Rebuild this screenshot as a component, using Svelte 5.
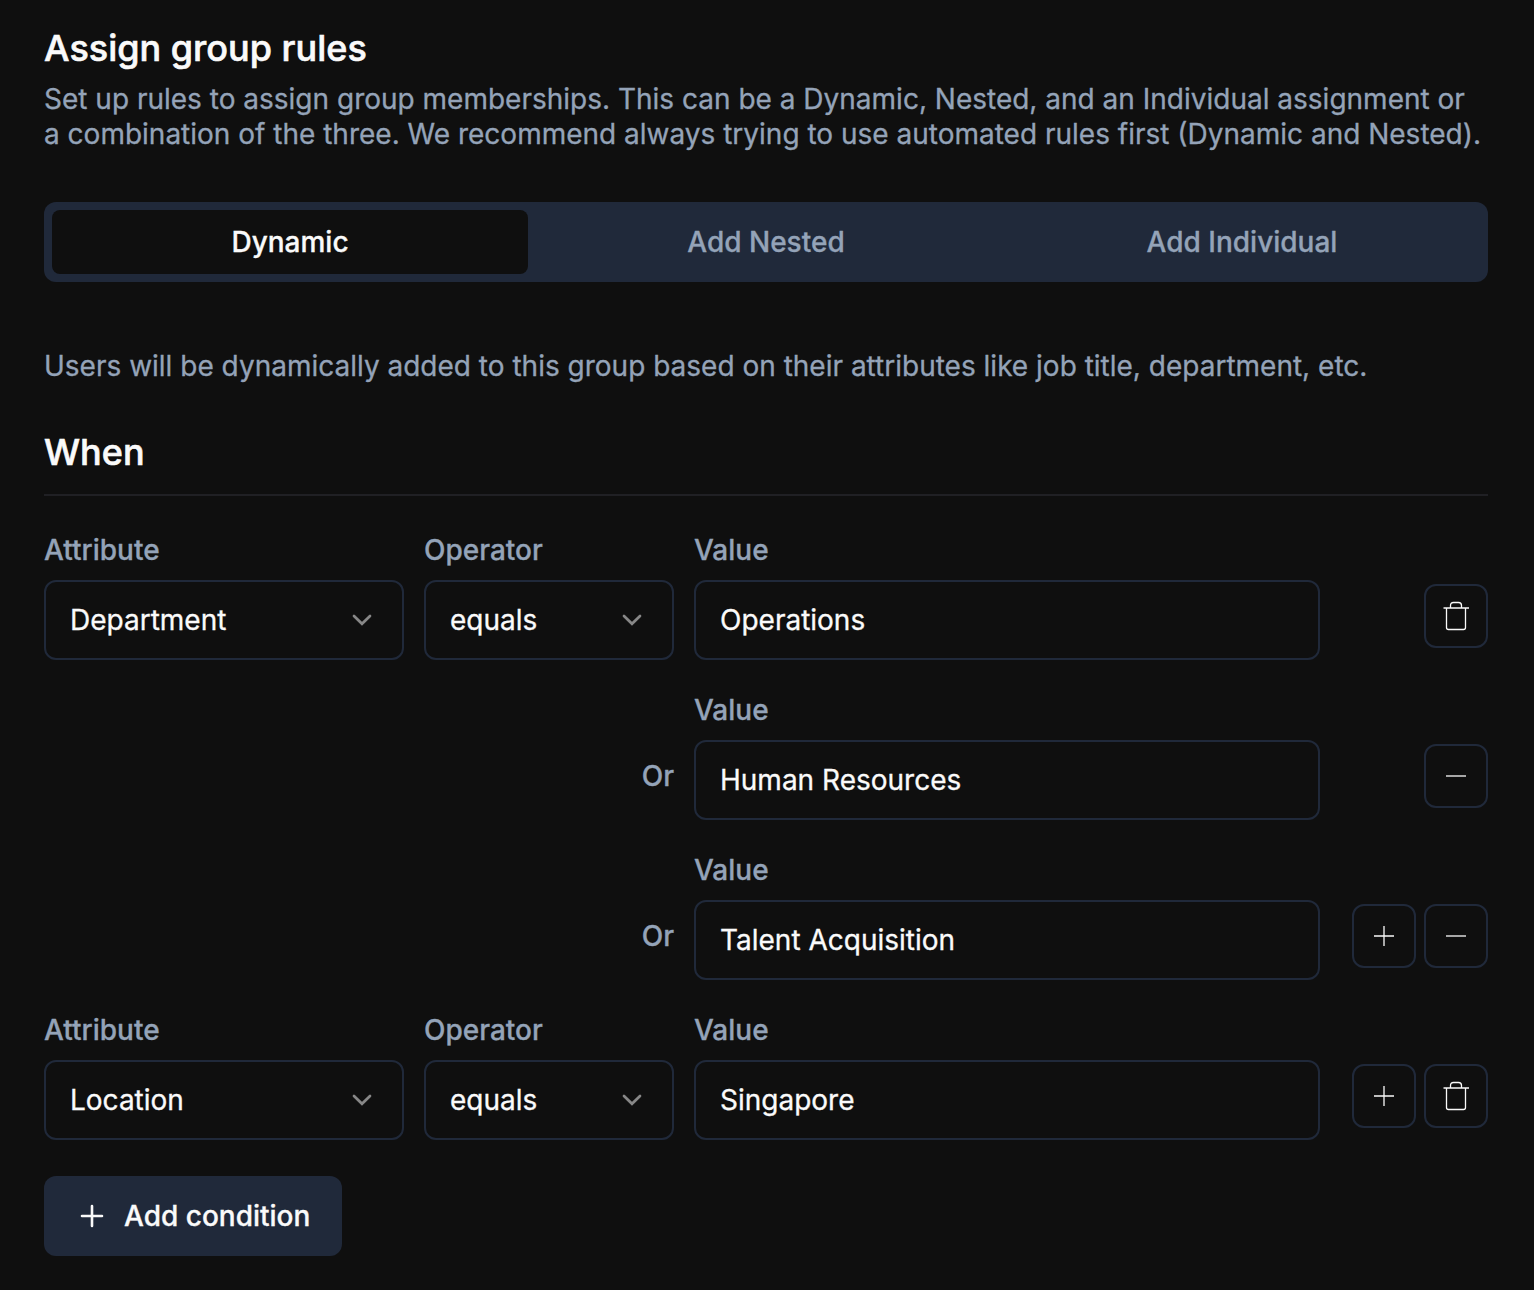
<script>
  const tabs = ['Dynamic', 'Add Nested', 'Add Individual'];
  let active = $state(0);
  const rows = [
    { attribute: 'Department', operator: 'equals', value: 'Operations', actions: ['trash'] },
    { value: 'Human Resources', actions: ['minus'] },
    { value: 'Talent Acquisition', actions: ['plus', 'minus'] },
    { attribute: 'Location', operator: 'equals', value: 'Singapore', actions: ['plus', 'trash'] }
  ];
</script>

{#snippet select(label, value)}
  <div class="field">
    <span class="label">{label}</span>
    <button class="box select">
      <span>{value}</span>
      <svg class="chevron" width="20" height="20" viewBox="0 0 20 20"><path d="M2 6 10 13.8 18 6" /></svg>
    </button>
  </div>
{/snippet}

<main>
  <h1>Assign group rules</h1>
  <p class="intro">Set up rules to assign group memberships. This can be a Dynamic, Nested, and an Individual assignment or<br />a combination of the three. We recommend always trying to use automated rules first (Dynamic and Nested).</p>

  <div class="tabs">
    {#each tabs as tab, i}
      <button class="tab" class:active={active === i} onclick={() => (active = i)}>{tab}</button>
    {/each}
  </div>

  <p class="hint">Users will be dynamically added to this group based on their attributes like job title, department, etc.</p>
  <h2>When</h2>

  <div class="rows">
    {#each rows as row}
      <div class="row">
        {#if row.attribute}
          {@render select('Attribute', row.attribute)}
          {@render select('Operator', row.operator)}
        {:else}
          <span class="or">Or</span>
        {/if}
        <div class="field">
          <span class="label">Value</span>
          <div class="box"><span>{row.value}</span></div>
        </div>
        <div class="actions">
          {#each row.actions as action}
            <button class="icon" aria-label={action}>
              <svg width="32" height="32" viewBox="0 0 32 32">
                {#if action === 'trash'}
                  <path d="M3.5 8H29M6.5 8V27.5Q6.5 29.5 8.5 29.5H23.5Q25.5 29.5 25.5 27.5V8M10.5 8V5.5Q10.5 2.5 13.5 2.5H18.5Q21.5 2.5 21.5 5.5V8" />
                {:else if action === 'plus'}
                  <path d="M6 16H26M16 6V26" />
                {:else}
                  <path d="M6 16H26" />
                {/if}
              </svg>
            </button>
          {/each}
        </div>
      </div>
    {/each}
  </div>

  <button class="add">
    <svg width="24" height="24" viewBox="0 0 24 24"><path d="M2 12H22M12 2V22" /></svg>
    <span>Add condition</span>
  </button>
</main>

<style>
  :global(body) { background: #0f0f0f; }
  main {
    box-sizing: border-box;
    width: 1534px;
    height: 1290px;
    padding: 28px 46px 0 44px;
    background: #0f0f0f;
    color: #fafafa;
    font: 400 28px/35px Inter, sans-serif;
    -webkit-text-stroke: 0.3px currentColor;
    white-space: nowrap;
  }
  h1, h2, p { margin: 0; }
  button { padding: 0; border: 0; background: none; color: inherit; font: inherit; }
  svg { display: block; fill: none; stroke: currentColor; }
  h1, h2 { font-size: 36px; line-height: 40px; font-weight: 500; -webkit-text-stroke-width: 0.6px; }
  h1 { margin-bottom: 14px; }
  .intro, .hint, .label, .or { color: #94a3b8; -webkit-text-stroke-color: #94a3b8; }
  .tabs {
    display: grid;
    grid-template-columns: repeat(3, 1fr);
    height: 64px;
    margin-top: 50px;
    padding: 8px;
    border-radius: 12px;
    background: #20293a;
  }
  .tab { border-radius: 8px; font-weight: 500; color: #94a3b8; -webkit-text-stroke-color: #94a3b8; }
  .tab.active { background: #0f0f0f; color: #fafafa; -webkit-text-stroke-color: #fafafa; }
  .hint { margin-top: 67px; }
  h2 { margin-top: 48px; padding-bottom: 22px; border-bottom: 2px solid #202024; }
  .rows { display: grid; gap: 36px; margin-top: 40px; }
  .row { display: grid; grid-template-columns: 360px 250px 626px 1fr; column-gap: 20px; height: 124px; }
  .field { display: flex; flex-direction: column; gap: 16px; }
  .label { line-height: 28px; font-weight: 500; }
  .box {
    box-sizing: border-box;
    display: flex;
    align-items: center;
    height: 80px;
    padding: 0 24px;
    border: 2px solid #20293a;
    border-radius: 12px;
  }
  .select { justify-content: space-between; padding-right: 30px; }
  .chevron { color: #878787; stroke-width: 2.7; stroke-linecap: round; }
  .or { grid-column: span 2; justify-self: end; margin-top: 63px; font-weight: 500; }
  .actions { display: flex; justify-content: flex-end; gap: 8px; margin-top: 48px; }
  .icon {
    box-sizing: border-box;
    display: grid;
    place-items: center;
    width: 64px;
    height: 64px;
    border: 2px solid #20293a;
    border-radius: 12px;
  }
  .icon svg { stroke-width: 1.3; }
  .add {
    display: flex;
    align-items: center;
    gap: 20px;
    height: 80px;
    margin-top: 36px;
    padding: 0 32px 0 36px;
    border-radius: 12px;
    background: #20293a;
    font-weight: 500;
  }
  .add svg { stroke-width: 2.6; stroke-linecap: round; }
</style>
